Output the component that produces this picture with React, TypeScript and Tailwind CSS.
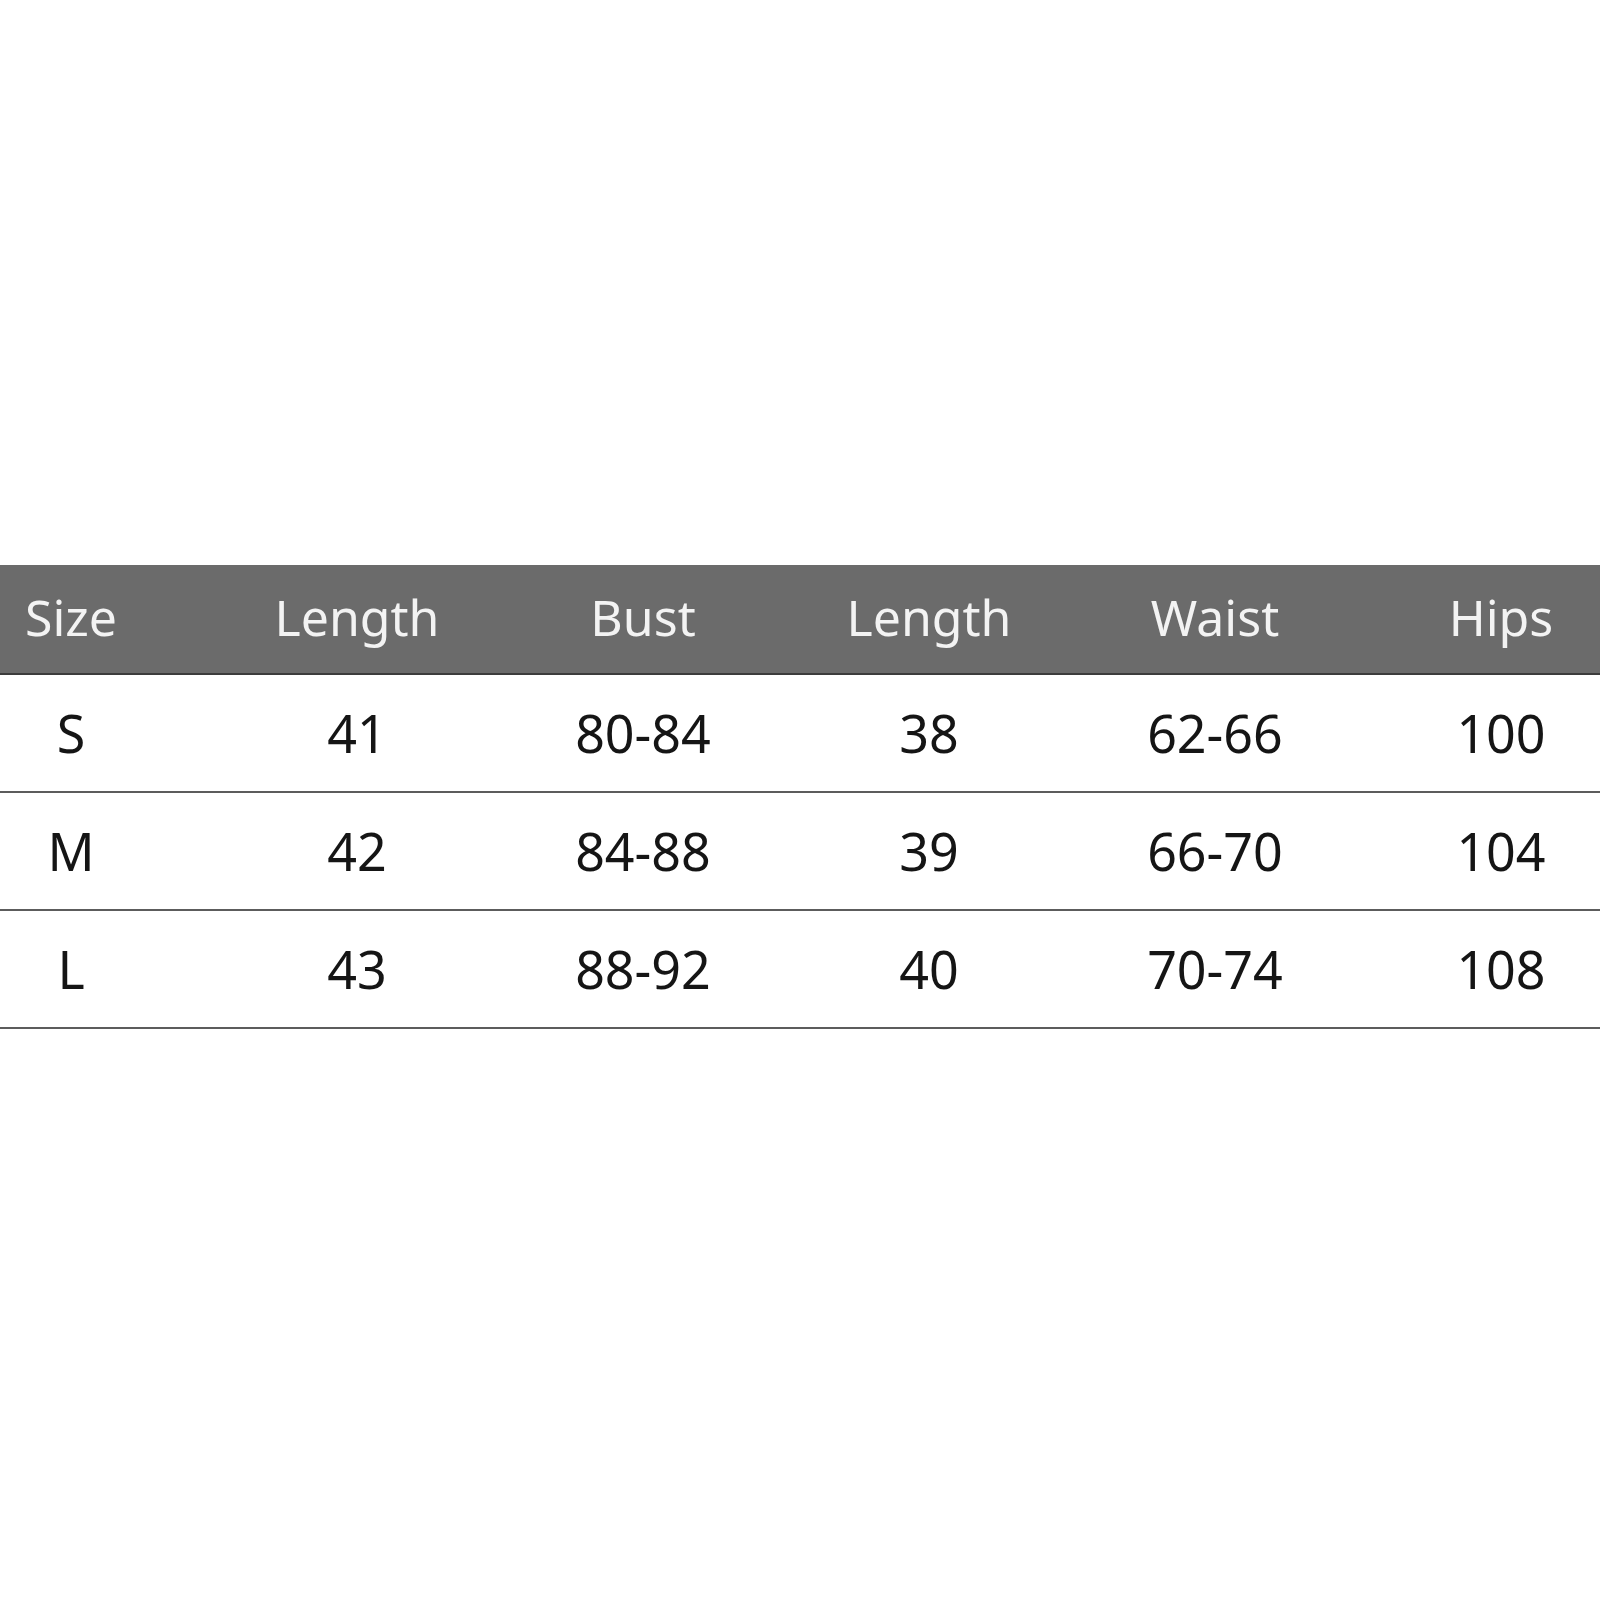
const headers = ["Size", "Length", "Bust", "Length", "Waist", "Hips"]

const rows = [
  ["S", "41", "80-84", "38", "62-66", "100"],
  ["M", "42", "84-88", "39", "66-70", "104"],
  ["L", "43", "88-92", "40", "70-74", "108"],
]

export default function App() {
  return (
    <div className="w-[1600px] h-[1600px] bg-white overflow-hidden pt-[565px] font-['Noto_Sans',sans-serif]">
      <div className="w-[1716px] -ml-[72px]">
        <div className="grid grid-cols-[repeat(6,286px)] h-[110px] bg-[#6b6b6b] border-b-2 border-[#3c3c3c] items-center">
          {headers.map((h, i) => (
            <div key={i} className="text-center text-[50px] leading-none text-[#f3f3f3] pb-[4px]">
              {h}
            </div>
          ))}
        </div>
        {rows.map((row, r) => (
          <div
            key={r}
            className="grid grid-cols-[repeat(6,286px)] h-[118px] border-b-2 border-[#5c5c5c] items-center"
          >
            {row.map((cell, c) => (
              <div key={c} className="text-center text-[52px] leading-none text-[#151515]">
                {cell}
              </div>
            ))}
          </div>
        ))}
      </div>
    </div>
  )
}
